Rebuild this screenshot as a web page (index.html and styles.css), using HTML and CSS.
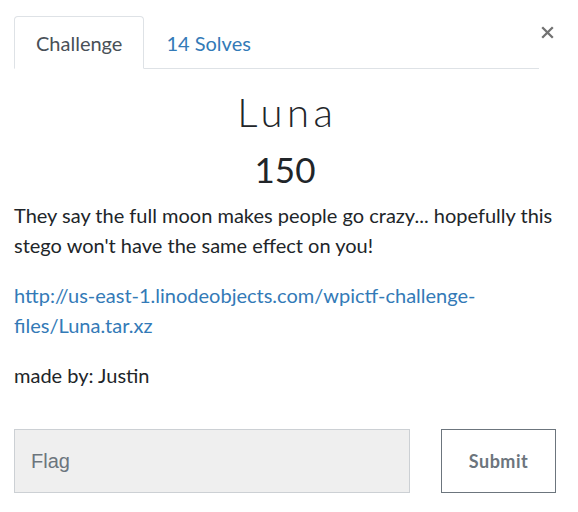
FILE: index.html
```html
<!DOCTYPE html>
<html>
<head>
<meta charset="utf-8">
<link rel="stylesheet" href="styles.css">
</head>
<body>
<div class="modal">
  <div class="header">
    <ul class="tabs">
      <li class="tab active">Challenge</li>
      <li class="tab"><a href="#">14 Solves</a></li>
    </ul>
    <button class="close" aria-label="Close">
      <svg width="13" height="13" viewBox="0 0 13 13"><path d="M1.2 1.2 L11.8 11.8 M11.8 1.2 L1.2 11.8" stroke="#727272" stroke-width="2.3" fill="none"/></svg>
    </button>
  </div>
  <h1 class="title">Luna</h1>
  <h2 class="value">150</h2>
  <div class="desc">
    <p>They say the full moon makes people go crazy... hopefully this stego won't have the same effect on you!</p>
    <p><a href="#">http://us-east-1.linodeobjects.com/wpictf-challenge-files/Luna.tar.xz</a></p>
    <p>made by: Justin</p>
  </div>
  <form class="submit-row">
    <input class="flag" type="text" placeholder="Flag">
    <button class="submit" type="button">Submit</button>
  </form>
</div>
</body>
</html>
```

FILE: styles.css
```css
* { box-sizing: border-box; }
html, body { margin: 0; padding: 0; background: #fff; }
body {
  font-family: Lato, "Noto Sans", sans-serif;
  font-size: 20px;
  line-height: 1.5;
  color: #212529;
}
.modal {
  padding: 16px 22px 0 14px;
}
.header {
  display: flex;
  align-items: flex-start;
}
.tabs {
  flex: 1;
  display: flex;
  list-style: none;
  margin: 0 2px 0 0;
  padding: 0;
  border-bottom: 1px solid #dee2e6;
}
.tab {
  font-size: 20px;
  line-height: 30px;
  padding: 11px 21px 10px 21px;
  border: 1px solid transparent;
  border-radius: 4px 4px 0 0;
  margin-bottom: -1px;
}
.tab.active {
  color: #495057;
  border-color: #dee2e6 #dee2e6 #fff;
  background: #fff;
}
.tab a { color: #337ab7; text-decoration: none; }
.close {
  background: none;
  border: 0;
  padding: 0;
  margin: 10px 2px 0 0;
  width: 13px;
  height: 13px;
  display: flex;
  align-items: center;
  justify-content: center;
}
.title {
  font-weight: 300;
  font-size: 40px;
  line-height: 50px;
  letter-spacing: 4.5px;
  padding-left: 4.5px;
  text-align: center;
  margin: 18px 0 0;
}
.value {
  font-weight: 400;
  font-size: 35px;
  line-height: 42px;
  text-align: center;
  margin: 11px 0 10px;
}
.desc p {
  margin: 0 0 20px;
}
.desc a { color: #337ab7; text-decoration: none; }
.submit-row {
  display: flex;
  gap: 31px;
  margin-top: 39px;
}
.flag {
  flex: 1;
  height: 64px;
  background: #efefef;
  border: 1px solid #ccd0d4;
  font-family: "Liberation Sans", Arial, sans-serif;
  font-size: 20px;
  padding: 0 16px;
  color: #495057;
}
.flag::placeholder { color: #6c757d; }
.submit {
  width: 115px;
  height: 64px;
  background: #fff;
  border: 1px solid #6c757d;
  color: #6c757d;
  font-family: Lato, sans-serif;
  font-weight: 700;
  font-size: 18px;
  letter-spacing: 0.5px;
}
```
